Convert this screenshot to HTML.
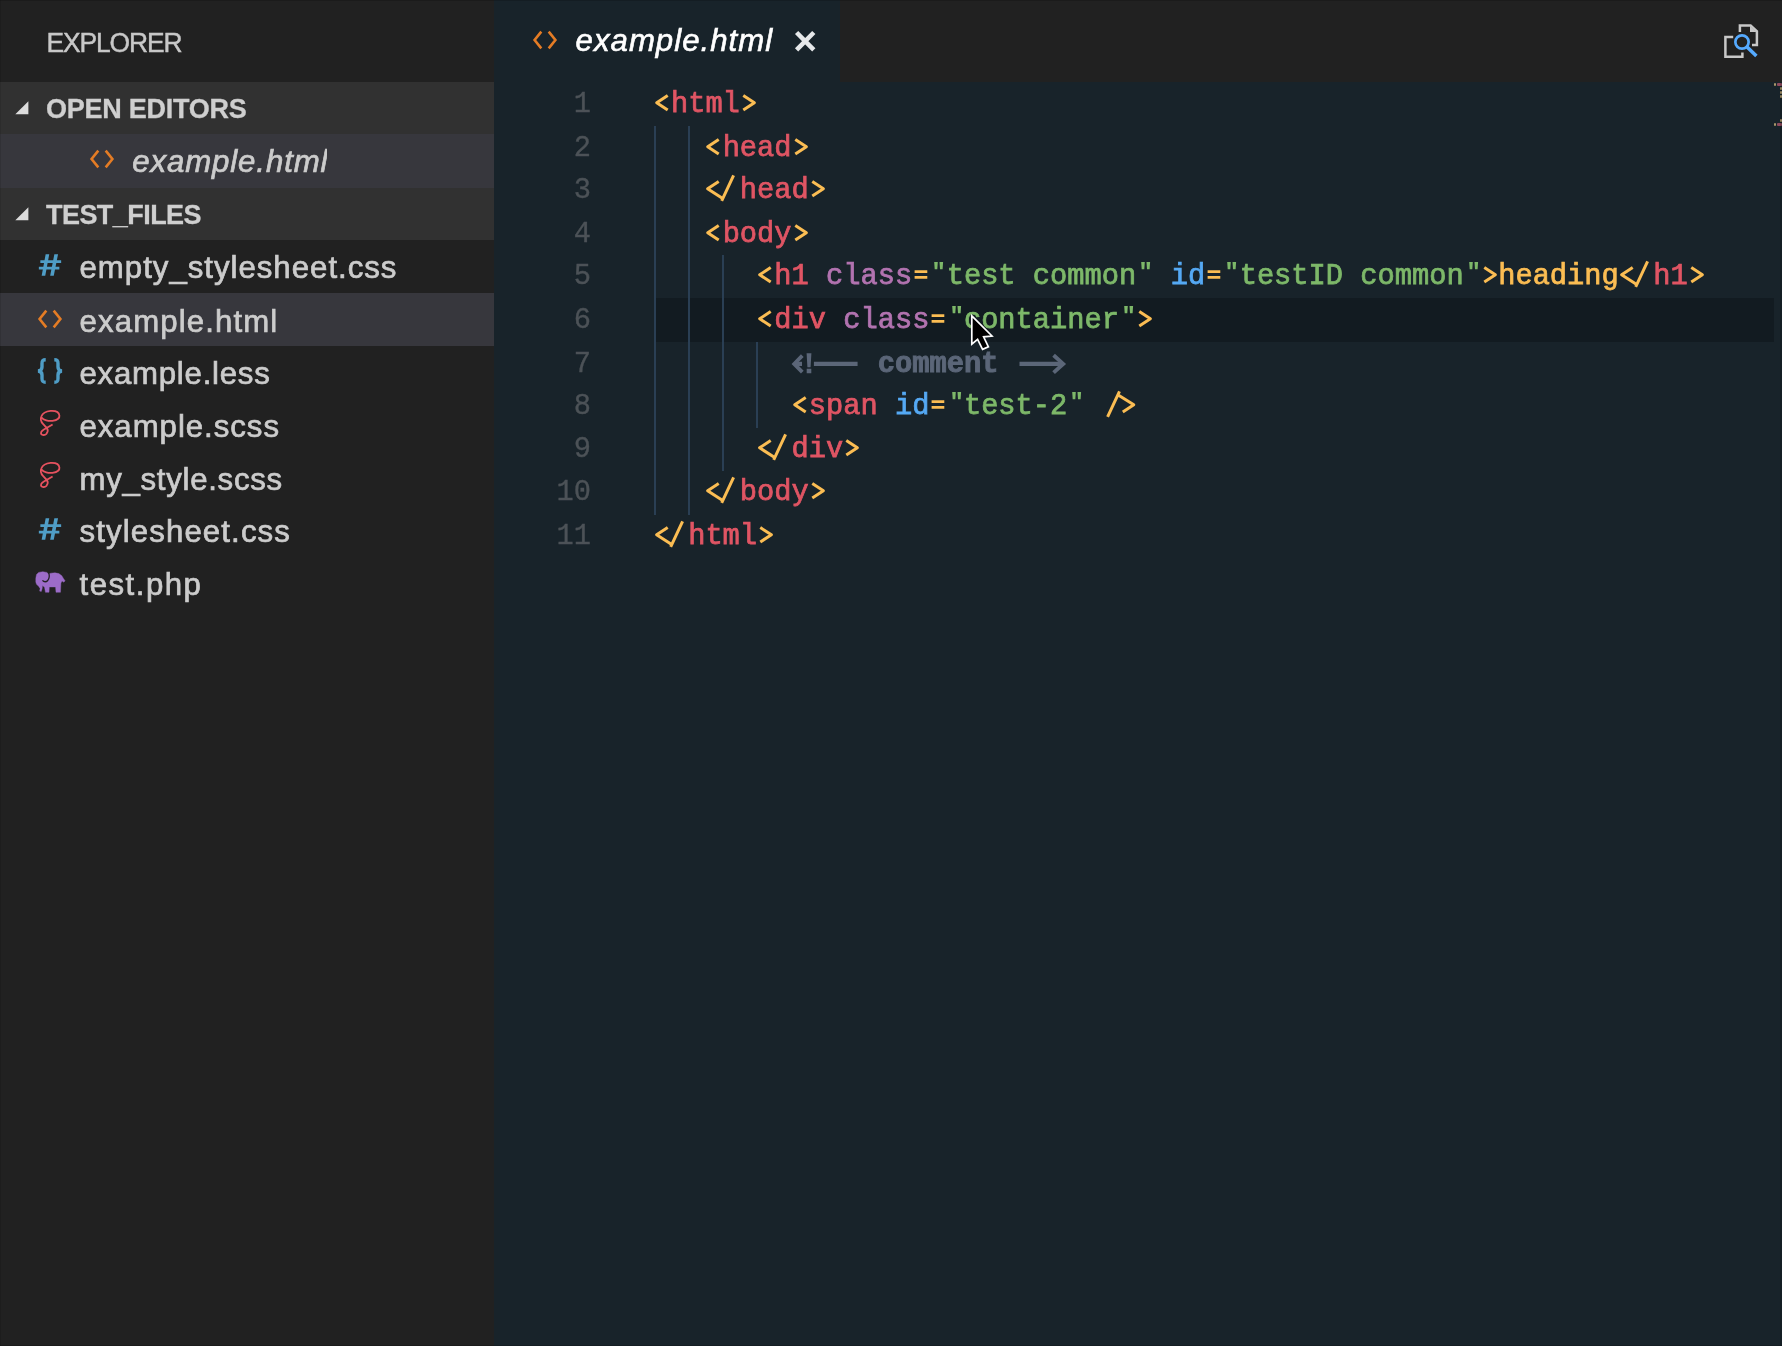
<!DOCTYPE html>
<html>
<head>
<meta charset="utf-8">
<title>example.html</title>
<style>
*{box-sizing:border-box;margin:0;padding:0}
html,body{width:1782px;height:1346px;overflow:hidden;background:#18232a}
body{position:relative;will-change:transform;font-family:"Liberation Sans",sans-serif;color:#cccccc}
.abs{position:absolute}
#sidebar{position:absolute;left:0;top:0;width:494px;height:1346px;background:#212121}
#sb-title{position:absolute;left:46.5px;top:25.8px;transform:scaleY(1.045);transform-origin:0 8px;-webkit-text-stroke:0.45px;font-size:26.4px;line-height:32px;color:#c8c8c8;white-space:nowrap;letter-spacing:-1.1px}
.sec{position:absolute;left:0;width:494px;background:#313131}
.sec .lbl{position:absolute;left:46px;top:11px;-webkit-text-stroke:0.3px;font-size:27px;line-height:32px;font-weight:bold;color:#cfcfcf;white-space:nowrap}
.sec svg{position:absolute;left:15px}
.row{position:absolute;left:0;width:494px;height:52.8px}
.row.sel2{background:#37373d}
.row.sel:before{content:'';position:absolute;left:0;right:0;top:0.7px;height:52.3px;background:#37373d}
.row .lbl{position:absolute;left:79.5px;top:9.6px;-webkit-text-stroke:0.7px;font-size:31.2px;line-height:38px;color:#cccccc;white-space:nowrap}
.row .ico{position:absolute;left:34px;top:10px;width:32px;height:32px}
#tabs{position:absolute;left:494px;top:0;width:1288px;height:82px;background:#212121}
#tab{position:absolute;left:0;top:0;width:346px;height:82px;background:#18232a}
#tab .lbl{position:absolute;left:81.6px;top:22px;-webkit-text-stroke:0.6px;font-size:31.2px;line-height:38px;font-style:italic;color:#ffffff;white-space:nowrap;letter-spacing:1px}
#editor{position:absolute;left:494px;top:82px;width:1288px;height:1264px;background:#18232a}
.ln{position:absolute;left:0;width:1288px;height:43.2px;font-family:"Liberation Mono",monospace;font-size:28.73px;line-height:43.2px;white-space:pre}
.ln .no{position:absolute;left:0;width:97px;text-align:right;color:#4c5257;-webkit-text-stroke:0.35px}
.ln .code{position:absolute;left:159.70px;top:0;-webkit-text-stroke:0.75px}
.ln.cur:before{content:"";position:absolute;left:161px;right:8px;top:-0.6px;height:44px;background:#121b21}
.g{position:absolute;width:2px;background:#2a3f54;z-index:2}
.lig{display:inline-block;position:relative;height:43.2px;vertical-align:top}
.lig svg{position:absolute;left:0;top:0;overflow:visible}
.p{color:#fbbd53}.t{color:#e05564}.a{color:#b273b0}.i{color:#55a9f4}.s{color:#7db869}.c{color:#5b6678;font-weight:bold;-webkit-text-stroke:0.9px}
</style>
</head>
<body>
<div id="sidebar">
<div id="sb-title">EXPLORER</div>
<div class="sec" style="top:82px;height:52px"><svg width="14" height="14" viewBox="0 0 14 14" style="top:19px"><path d="M13.4 0.2 L13.4 13.2 L0.3 13.2 Z" fill="#dcdcdc"/></svg><span class="lbl" style="letter-spacing:-0.25px">OPEN EDITORS</span></div>
<div class="row sel2" style="top:134px;height:54px"><svg class="ico" style="left:86.0px;top:8.5px" viewBox="0 0 32 32"><path d="M12.3 7.6 L5.6 16 L12.3 24.4 M19.7 7.6 L26.4 16 L19.7 24.4" fill="none" stroke="#e47c25" stroke-width="2.6"/></svg><span class="lbl" style="left:132.2px;top:9px;width:194.8px;overflow:hidden;font-style:italic;letter-spacing:0.9px">example.html</span></div>
<div class="sec" style="top:188px;height:52px"><svg width="14" height="14" viewBox="0 0 14 14" style="top:19px"><path d="M13.4 0.2 L13.4 13.2 L0.3 13.2 Z" fill="#dcdcdc"/></svg><span class="lbl" style="letter-spacing:-0.55px">TEST_FILES</span></div>
<div class="row" style="top:240.0px"><svg class="ico" style="left:34.3px;top:8.8px" viewBox="0 0 32 32"><path d="M11.65 5.3 L15.25 5.3 L11.25 26.7 L7.65 26.7 Z M20.35 5.3 L24.05 5.3 L19.75 26.7 L16.15 26.7 Z M6.35 11.3 H27.15 V14.0 H6.35 Z M4.85 17.8 H25.35 V20.4 H4.85 Z" fill="#4f9dc6"/></svg><span class="lbl" style="letter-spacing:0.99px;margin-top:-1px">empty_stylesheet.css</span></div>
<div class="row sel" style="top:292.8px"><svg class="ico" style="left:34.3px;top:10.3px" viewBox="0 0 32 32"><path d="M12.3 7.6 L5.6 16 L12.3 24.4 M19.7 7.6 L26.4 16 L19.7 24.4" fill="none" stroke="#e47c25" stroke-width="2.6"/></svg><span class="lbl" style="letter-spacing:1.12px;margin-top:1px">example.html</span></div>
<div class="row" style="top:345.6px"><svg class="ico" style="left:34.3px;top:9.1px" viewBox="0 0 32 32"><path d="M11.7 4.8 C8.7 4.8 8.0 5.8 8.0 8.5 L8.0 12 C8.0 14.5 6.6 15.8 4.0 16 C6.6 16.2 8.0 17.5 8.0 20 L8.0 23.5 C8.0 26.2 8.7 27.2 11.7 27.2 M20.3 4.8 C23.3 4.8 24.0 5.8 24.0 8.5 L24.0 12 C24.0 14.5 25.4 15.8 28.0 16 C25.4 16.2 24.0 17.5 24.0 20 L24.0 23.5 C24.0 26.2 23.3 27.2 20.3 27.2" fill="none" stroke="#4f9dc6" stroke-width="3.4"/></svg><span class="lbl" style="letter-spacing:0.75px;margin-top:0px">example.less</span></div>
<div class="row" style="top:398.4px"><svg class="ico" style="left:34.3px;top:8.2px" viewBox="0 0 32 32"><path d="M7.6 10.6 C9.5 13.2 14.5 14.4 18.5 13.8 C22.5 13.2 25.8 11.5 25.4 8.5 C25 5 21 3.6 16.5 3.9 C12 4.3 8.5 6.5 7.3 9.5 C6 12.5 6.8 14.5 9 16.8 L12.9 21.1 C14.2 23 13.8 25.2 12.4 26.8 C11 28.2 8.4 28.5 7.3 27.2 C6.4 25.8 7.4 24 9.5 22.7 C12.5 21 15.5 19.3 18.6 17.5" fill="none" stroke="#e6525f" stroke-width="1.8"/></svg><span class="lbl" style="letter-spacing:0.96px;margin-top:0px">example.scss</span></div>
<div class="row" style="top:451.2px"><svg class="ico" style="left:34.3px;top:8.2px" viewBox="0 0 32 32"><path d="M7.6 10.6 C9.5 13.2 14.5 14.4 18.5 13.8 C22.5 13.2 25.8 11.5 25.4 8.5 C25 5 21 3.6 16.5 3.9 C12 4.3 8.5 6.5 7.3 9.5 C6 12.5 6.8 14.5 9 16.8 L12.9 21.1 C14.2 23 13.8 25.2 12.4 26.8 C11 28.2 8.4 28.5 7.3 27.2 C6.4 25.8 7.4 24 9.5 22.7 C12.5 21 15.5 19.3 18.6 17.5" fill="none" stroke="#e6525f" stroke-width="1.8"/></svg><span class="lbl" style="letter-spacing:0.71px;margin-top:0px">my_style.scss</span></div>
<div class="row" style="top:504.0px"><svg class="ico" style="left:34.3px;top:8.9px" viewBox="0 0 32 32"><path d="M11.65 5.3 L15.25 5.3 L11.25 26.7 L7.65 26.7 Z M20.35 5.3 L24.05 5.3 L19.75 26.7 L16.15 26.7 Z M6.35 11.3 H27.15 V14.0 H6.35 Z M4.85 17.8 H25.35 V20.4 H4.85 Z" fill="#4f9dc6"/></svg><span class="lbl" style="letter-spacing:1.12px;margin-top:-1px">stylesheet.css</span></div>
<div class="row" style="top:556.8px"><svg class="ico" style="left:34.3px;top:9.5px" viewBox="0 0 32 32"><path d="M1.79 12.34 L2.54 8.48 L4.62 6.40 L8.78 5.66 L12.94 6.40 L14.72 8.18 L15.61 7.59 L17.10 7.14 L20.96 6.84 L24.82 7.59 L27.79 9.67 L29.58 12.64 L31.06 14.72 L29.87 16.21 L28.09 15.02 L26.90 17.10 L26.46 26.31 L22.0 26.31 L21.55 20.96 L15.31 20.96 L15.02 26.31 L11.45 26.31 L10.56 21.26 L8.48 19.47 L8.18 22.45 L7.29 25.42 L5.66 25.12 L6.10 22.45 L4.62 20.37 L2.54 18.29 L1.79 15.91 Z" fill="#9c6cc8" stroke="#9c6cc8" stroke-width="0.4" stroke-linejoin="round"/><path d="M14.72 6.6 C15.6 9.5 15.6 12.5 13.53 14.72 C12.3 16.0 10.0 16.3 8.48 14.42" fill="none" stroke="#212121" stroke-width="1.3"/></svg><span class="lbl" style="letter-spacing:1.49px;margin-top:0px">test.php</span></div>
</div>
<div id="tabs"><div id="tab">
<svg class="abs" style="left:34.7px;top:24.4px" width="32" height="32" viewBox="0 0 32 32"><path d="M12.3 7.6 L5.6 16 L12.3 24.4 M19.7 7.6 L26.4 16 L19.7 24.4" fill="none" stroke="#e47c25" stroke-width="2.6"/></svg>
<span class="lbl">example.html</span>
</div></div>
<svg class="abs" style="left:785px;top:20px" width="40" height="40" viewBox="785 20 40 40"><path d="M796.6 32.5 L813.8 49.8 M813.8 32.5 L796.6 49.8" fill="none" stroke="#e6e8ea" stroke-width="4.6"/></svg>
<svg class="abs" style="left:1715px;top:15px" width="55" height="55" viewBox="1715 15 55 55">
<path d="M1739.9 32 L1739.9 25.4 L1750.6 25.4 L1756.9 31.4 L1756.9 44.9 L1752 44.9" fill="none" stroke="#c8c8c8" stroke-width="2.5"/>
<path d="M1750 26 L1750 32 L1756.5 32 Z" fill="#c8c8c8"/>
<path d="M1733.2 37 L1725.4 37 L1725.4 56.7 L1742.4 56.7 L1742.4 52.4" fill="none" stroke="#c8c8c8" stroke-width="2.5"/>
<circle cx="1742" cy="42" r="6.65" fill="none" stroke="#55aaff" stroke-width="2.7"/>
<path d="M1746.8 46.8 L1756.4 56" stroke="#55aaff" stroke-width="3.6"/>
</svg>
<div id="editor">

<div class="ln" style="top:0.6px"><span class="no" style="top:0px">1</span><span class="code" style="top:0px"><span class="lig" style="width:17.24px"><svg width="17.24" height="43.2" viewBox="0 0 17.24 43.2"><path d="M13.7 12.6 L2.7 19.8 L13.7 27.0" fill="none" stroke="#fbbd53" stroke-width="3.0" stroke-linejoin="round"/></svg></span><span class="t">html</span><span class="lig" style="width:17.24px"><svg width="17.24" height="43.2" viewBox="0 0 17.24 43.2"><path d="M3.3 12.6 L14.4 19.8 L3.3 27.0" fill="none" stroke="#fbbd53" stroke-width="3.0" stroke-linejoin="round"/></svg></span></span></div>
<i class="g" style="left:160px;top:44px;height:43px"></i><i class="g" style="left:194px;top:44px;height:43px"></i>
<div class="ln" style="top:43.8px"><span class="no" style="top:1px">2</span><span class="code" style="top:1px">   <span class="lig" style="width:17.24px"><svg width="17.24" height="43.2" viewBox="0 0 17.24 43.2"><path d="M13.7 12.6 L2.7 19.8 L13.7 27.0" fill="none" stroke="#fbbd53" stroke-width="3.0" stroke-linejoin="round"/></svg></span><span class="t">head</span><span class="lig" style="width:17.24px"><svg width="17.24" height="43.2" viewBox="0 0 17.24 43.2"><path d="M3.3 12.6 L14.4 19.8 L3.3 27.0" fill="none" stroke="#fbbd53" stroke-width="3.0" stroke-linejoin="round"/></svg></span></span></div>
<i class="g" style="left:160px;top:87px;height:43px"></i><i class="g" style="left:194px;top:87px;height:43px"></i>
<div class="ln" style="top:87.0px"><span class="no" style="top:0px">3</span><span class="code" style="top:0px">   <span class="lig" style="width:34.48px"><svg width="34.48" height="43.2" viewBox="0 0 34.48 43.2"><path d="M13.7 12.6 L2.6 19.8 L17.7 29.6 M28.6 6.3 L16.7 31.9" fill="none" stroke="#fbbd53" stroke-width="3.0" stroke-linejoin="round"/></svg></span><span class="t">head</span><span class="lig" style="width:17.24px"><svg width="17.24" height="43.2" viewBox="0 0 17.24 43.2"><path d="M3.3 12.6 L14.4 19.8 L3.3 27.0" fill="none" stroke="#fbbd53" stroke-width="3.0" stroke-linejoin="round"/></svg></span></span></div>
<i class="g" style="left:160px;top:130px;height:43px"></i><i class="g" style="left:194px;top:130px;height:43px"></i>
<div class="ln" style="top:130.2px"><span class="no" style="top:1px">4</span><span class="code" style="top:1px">   <span class="lig" style="width:17.24px"><svg width="17.24" height="43.2" viewBox="0 0 17.24 43.2"><path d="M13.7 12.6 L2.7 19.8 L13.7 27.0" fill="none" stroke="#fbbd53" stroke-width="3.0" stroke-linejoin="round"/></svg></span><span class="t">body</span><span class="lig" style="width:17.24px"><svg width="17.24" height="43.2" viewBox="0 0 17.24 43.2"><path d="M3.3 12.6 L14.4 19.8 L3.3 27.0" fill="none" stroke="#fbbd53" stroke-width="3.0" stroke-linejoin="round"/></svg></span></span></div>
<i class="g" style="left:160px;top:173px;height:44px"></i><i class="g" style="left:194px;top:173px;height:44px"></i><i class="g" style="left:228px;top:173px;height:44px"></i>
<div class="ln" style="top:173.4px"><span class="no" style="top:0px">5</span><span class="code" style="top:0px">      <span class="lig" style="width:17.24px"><svg width="17.24" height="43.2" viewBox="0 0 17.24 43.2"><path d="M13.7 12.6 L2.7 19.8 L13.7 27.0" fill="none" stroke="#fbbd53" stroke-width="3.0" stroke-linejoin="round"/></svg></span><span class="t">h1</span> <span class="a">class</span><span class="lig" style="width:17.24px"><svg width="17.24" height="43.2" viewBox="0 0 17.24 43.2"><path d="M2.6 15.2 H15.3 V17.9 H2.6 Z M2.6 21.1 H15.3 V23.8 H2.6 Z" fill="#fbbd53"/></svg></span><span class="lig" style="width:17.24px"><svg width="17.24" height="43.2" viewBox="0 0 17.24 43.2"><path d="M5.2 7.0 H8.8 L8.3 14.2 H5.7 Z M10.5 7.0 H14.1 L13.6 14.2 H11.0 Z" fill="#7db869"/></svg></span><span class="s">test common</span><span class="lig" style="width:17.24px"><svg width="17.24" height="43.2" viewBox="0 0 17.24 43.2"><path d="M5.2 7.0 H8.8 L8.3 14.2 H5.7 Z M10.5 7.0 H14.1 L13.6 14.2 H11.0 Z" fill="#7db869"/></svg></span> <span class="i">id</span><span class="lig" style="width:17.24px"><svg width="17.24" height="43.2" viewBox="0 0 17.24 43.2"><path d="M2.6 15.2 H15.3 V17.9 H2.6 Z M2.6 21.1 H15.3 V23.8 H2.6 Z" fill="#fbbd53"/></svg></span><span class="lig" style="width:17.24px"><svg width="17.24" height="43.2" viewBox="0 0 17.24 43.2"><path d="M5.2 7.0 H8.8 L8.3 14.2 H5.7 Z M10.5 7.0 H14.1 L13.6 14.2 H11.0 Z" fill="#7db869"/></svg></span><span class="s">testID common</span><span class="lig" style="width:17.24px"><svg width="17.24" height="43.2" viewBox="0 0 17.24 43.2"><path d="M5.2 7.0 H8.8 L8.3 14.2 H5.7 Z M10.5 7.0 H14.1 L13.6 14.2 H11.0 Z" fill="#7db869"/></svg></span><span class="lig" style="width:17.24px"><svg width="17.24" height="43.2" viewBox="0 0 17.24 43.2"><path d="M3.3 12.6 L14.4 19.8 L3.3 27.0" fill="none" stroke="#fbbd53" stroke-width="3.0" stroke-linejoin="round"/></svg></span><span class="p">heading</span><span class="lig" style="width:34.48px"><svg width="34.48" height="43.2" viewBox="0 0 34.48 43.2"><path d="M13.7 12.6 L2.6 19.8 L17.7 29.6 M28.6 6.3 L16.7 31.9" fill="none" stroke="#fbbd53" stroke-width="3.0" stroke-linejoin="round"/></svg></span><span class="t">h1</span><span class="lig" style="width:17.24px"><svg width="17.24" height="43.2" viewBox="0 0 17.24 43.2"><path d="M3.3 12.6 L14.4 19.8 L3.3 27.0" fill="none" stroke="#fbbd53" stroke-width="3.0" stroke-linejoin="round"/></svg></span></span></div>
<i class="g" style="left:160px;top:217px;height:43px"></i><i class="g" style="left:194px;top:217px;height:43px"></i><i class="g" style="left:228px;top:217px;height:43px"></i>
<div class="ln cur" style="top:216.6px"><span class="no" style="top:0px">6</span><span class="code" style="top:0px">      <span class="lig" style="width:17.24px"><svg width="17.24" height="43.2" viewBox="0 0 17.24 43.2"><path d="M13.7 12.6 L2.7 19.8 L13.7 27.0" fill="none" stroke="#fbbd53" stroke-width="3.0" stroke-linejoin="round"/></svg></span><span class="t">div</span> <span class="a">class</span><span class="lig" style="width:17.24px"><svg width="17.24" height="43.2" viewBox="0 0 17.24 43.2"><path d="M2.6 15.2 H15.3 V17.9 H2.6 Z M2.6 21.1 H15.3 V23.8 H2.6 Z" fill="#fbbd53"/></svg></span><span class="lig" style="width:17.24px"><svg width="17.24" height="43.2" viewBox="0 0 17.24 43.2"><path d="M5.2 7.0 H8.8 L8.3 14.2 H5.7 Z M10.5 7.0 H14.1 L13.6 14.2 H11.0 Z" fill="#7db869"/></svg></span><span class="s">container</span><span class="lig" style="width:17.24px"><svg width="17.24" height="43.2" viewBox="0 0 17.24 43.2"><path d="M5.2 7.0 H8.8 L8.3 14.2 H5.7 Z M10.5 7.0 H14.1 L13.6 14.2 H11.0 Z" fill="#7db869"/></svg></span><span class="lig" style="width:17.24px"><svg width="17.24" height="43.2" viewBox="0 0 17.24 43.2"><path d="M3.3 12.6 L14.4 19.8 L3.3 27.0" fill="none" stroke="#fbbd53" stroke-width="3.0" stroke-linejoin="round"/></svg></span></span></div>
<i class="g" style="left:160px;top:260px;height:43px"></i><i class="g" style="left:194px;top:260px;height:43px"></i><i class="g" style="left:228px;top:260px;height:43px"></i><i class="g" style="left:262px;top:260px;height:43px"></i>
<div class="ln" style="top:259.8px"><span class="no" style="top:1px">7</span><span class="code" style="top:1px">        <span class="lig" style="width:68.96px"><svg width="68.96" height="43.2" viewBox="0 0 68.96 43.2"><path d="M10.3 12.6 L2.2 20.9 L10.3 29.2" fill="none" stroke="#5b6678" stroke-width="3.8"/><path d="M2.6 20.9 L10 20.9 M21.9 20.9 L65.6 20.9" stroke="#5b6678" stroke-width="4.3"/><path d="M14.6 10.2 L19.4 10.2 L18.6 24.2 L15.4 24.2 Z M14.7 25.8 h4.6 v4.5 h-4.6 Z" fill="#5b6678"/></svg></span><span class="c"> comment </span><span class="lig" style="width:51.72px"><svg width="51.72" height="43.2" viewBox="0 0 51.72 43.2"><path d="M3.5 20.9 L46 20.9" stroke="#5b6678" stroke-width="4.3"/><path d="M37.6 12.2 L47.2 20.9 L37.6 29.6" fill="none" stroke="#5b6678" stroke-width="3.9"/></svg></span></span></div>
<i class="g" style="left:160px;top:303px;height:43px"></i><i class="g" style="left:194px;top:303px;height:43px"></i><i class="g" style="left:228px;top:303px;height:43px"></i><i class="g" style="left:262px;top:303px;height:43px"></i>
<div class="ln" style="top:303.0px"><span class="no" style="top:0px">8</span><span class="code" style="top:0px">        <span class="lig" style="width:17.24px"><svg width="17.24" height="43.2" viewBox="0 0 17.24 43.2"><path d="M13.7 12.6 L2.7 19.8 L13.7 27.0" fill="none" stroke="#fbbd53" stroke-width="3.0" stroke-linejoin="round"/></svg></span><span class="t">span</span> <span class="i">id</span><span class="lig" style="width:17.24px"><svg width="17.24" height="43.2" viewBox="0 0 17.24 43.2"><path d="M2.6 15.2 H15.3 V17.9 H2.6 Z M2.6 21.1 H15.3 V23.8 H2.6 Z" fill="#fbbd53"/></svg></span><span class="lig" style="width:17.24px"><svg width="17.24" height="43.2" viewBox="0 0 17.24 43.2"><path d="M5.2 7.0 H8.8 L8.3 14.2 H5.7 Z M10.5 7.0 H14.1 L13.6 14.2 H11.0 Z" fill="#7db869"/></svg></span><span class="s">test-2</span><span class="lig" style="width:17.24px"><svg width="17.24" height="43.2" viewBox="0 0 17.24 43.2"><path d="M5.2 7.0 H8.8 L8.3 14.2 H5.7 Z M10.5 7.0 H14.1 L13.6 14.2 H11.0 Z" fill="#7db869"/></svg></span> <span class="lig" style="width:34.48px"><svg width="34.48" height="43.2" viewBox="0 0 34.48 43.2"><path d="M17.5 6.3 L5.6 31.9 M16.6 10.2 L31.8 19.8 L20.8 27.0" fill="none" stroke="#fbbd53" stroke-width="3.0" stroke-linejoin="round"/></svg></span></span></div>
<i class="g" style="left:160px;top:346px;height:43px"></i><i class="g" style="left:194px;top:346px;height:43px"></i><i class="g" style="left:228px;top:346px;height:43px"></i>
<div class="ln" style="top:346.2px"><span class="no" style="top:0px">9</span><span class="code" style="top:0px">      <span class="lig" style="width:34.48px"><svg width="34.48" height="43.2" viewBox="0 0 34.48 43.2"><path d="M13.7 12.6 L2.6 19.8 L17.7 29.6 M28.6 6.3 L16.7 31.9" fill="none" stroke="#fbbd53" stroke-width="3.0" stroke-linejoin="round"/></svg></span><span class="t">div</span><span class="lig" style="width:17.24px"><svg width="17.24" height="43.2" viewBox="0 0 17.24 43.2"><path d="M3.3 12.6 L14.4 19.8 L3.3 27.0" fill="none" stroke="#fbbd53" stroke-width="3.0" stroke-linejoin="round"/></svg></span></span></div>
<i class="g" style="left:160px;top:389px;height:44px"></i><i class="g" style="left:194px;top:389px;height:44px"></i>
<div class="ln" style="top:389.4px"><span class="no" style="top:0px">10</span><span class="code" style="top:0px">   <span class="lig" style="width:34.48px"><svg width="34.48" height="43.2" viewBox="0 0 34.48 43.2"><path d="M13.7 12.6 L2.6 19.8 L17.7 29.6 M28.6 6.3 L16.7 31.9" fill="none" stroke="#fbbd53" stroke-width="3.0" stroke-linejoin="round"/></svg></span><span class="t">body</span><span class="lig" style="width:17.24px"><svg width="17.24" height="43.2" viewBox="0 0 17.24 43.2"><path d="M3.3 12.6 L14.4 19.8 L3.3 27.0" fill="none" stroke="#fbbd53" stroke-width="3.0" stroke-linejoin="round"/></svg></span></span></div>

<div class="ln" style="top:432.6px"><span class="no" style="top:0px">11</span><span class="code" style="top:0px"><span class="lig" style="width:34.48px"><svg width="34.48" height="43.2" viewBox="0 0 34.48 43.2"><path d="M13.7 12.6 L2.6 19.8 L17.7 29.6 M28.6 6.3 L16.7 31.9" fill="none" stroke="#fbbd53" stroke-width="3.0" stroke-linejoin="round"/></svg></span><span class="t">html</span><span class="lig" style="width:17.24px"><svg width="17.24" height="43.2" viewBox="0 0 17.24 43.2"><path d="M3.3 12.6 L14.4 19.8 L3.3 27.0" fill="none" stroke="#fbbd53" stroke-width="3.0" stroke-linejoin="round"/></svg></span></span></div>
<i class="abs" style="left:1280.3px;top:1.2px;width:2.2px;height:2.4px;border-radius:1px;background:#a8966a"></i>
<i class="abs" style="left:1283.0px;top:1.2px;width:5.0px;height:2.4px;border-radius:1px;background:#8e4a5e"></i>
<i class="abs" style="left:1286.0px;top:5.2px;width:2.0px;height:2.4px;border-radius:1px;background:#a8966a"></i>
<i class="abs" style="left:1286.0px;top:9.2px;width:2.0px;height:2.4px;border-radius:1px;background:#a8966a"></i>
<i class="abs" style="left:1286.0px;top:13.2px;width:2.0px;height:2.4px;border-radius:1px;background:#a8966a"></i>
<i class="abs" style="left:1286.0px;top:37.2px;width:2.0px;height:2.4px;border-radius:1px;background:#a8966a"></i>
<i class="abs" style="left:1280.3px;top:41.2px;width:2.2px;height:2.4px;border-radius:1px;background:#a8966a"></i>
<i class="abs" style="left:1283.0px;top:41.2px;width:5.0px;height:2.4px;border-radius:1px;background:#8e4a5e"></i>
</div>
<i class="abs" style="left:0;top:0;width:1782px;height:1px;background:rgba(0,0,0,0.16)"></i><i class="abs" style="left:0;top:0;width:1px;height:1346px;background:rgba(0,0,0,0.10)"></i><i class="abs" style="left:1780px;top:82px;width:2px;height:1264px;background:rgba(0,0,0,0.14)"></i><i class="abs" style="left:0;top:1345px;width:1782px;height:1px;background:rgba(0,0,0,0.16)"></i><svg class="abs" style="left:960px;top:305px" width="50" height="55" viewBox="960 305 50 55"><path d="M971.8 315.8 L971.8 344.2 L977.6 339.4 L982.6 349.4 L988.4 346.8 L983.6 336.8 L992 336 Z" fill="#000" stroke="#fff" stroke-width="1.7" stroke-linejoin="miter"/></svg>
</body>
</html>
